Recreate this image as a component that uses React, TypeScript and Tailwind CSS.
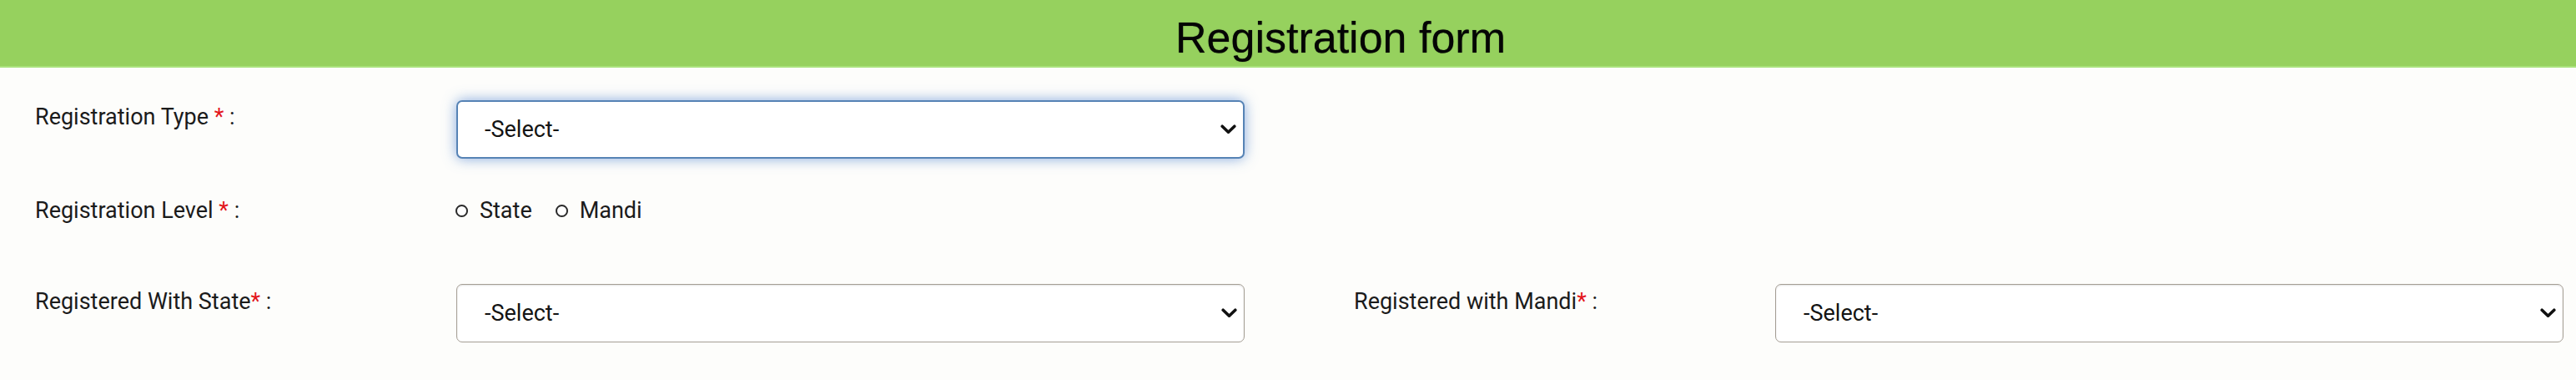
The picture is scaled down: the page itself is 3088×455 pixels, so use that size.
import React from "react";

const Req = () => <span className="text-[#e3141b]">*</span>;

function Chevron() {
  return (
    <svg width="19" height="12" viewBox="0 0 19 12" className="shrink-0">
      <polyline points="2.2,2.2 9.5,9.2 16.8,2.2" fill="none" stroke="#111" strokeWidth="3.6" strokeLinecap="round" strokeLinejoin="round" />
    </svg>
  );
}

function FakeSelect({ focused }: { focused?: boolean }) {
  return (
    <div
      className={
        focused
          ? "flex h-[70px] w-[945px] shrink-0 items-center justify-between rounded-[7px] border-2 border-[#5683b5] bg-white pl-[32px] pr-[8px] shadow-[0_0_16px_rgba(85,135,210,0.7)]"
          : "flex h-[70px] w-[945px] shrink-0 items-center justify-between rounded-[7px] border-[1.5px] border-[#a59e94] bg-white pl-[33px] pr-[8px] shadow-[inset_0_1px_2px_rgba(0,0,0,0.12)]"
      }
    >
      <span className="text-[27px] leading-none text-[#141414]">-Select-</span>
      <Chevron />
    </div>
  );
}

function Radio({ label }: { label: string }) {
  return (
    <label className="flex items-center gap-[14px]">
      <span className="h-[15px] w-[15px] rounded-full border-2 border-[#2b2b2b] bg-white" />
      <span>{label}</span>
    </label>
  );
}

export default function App() {
  return (
    <div className="min-h-[455px] w-full bg-[#fdfdfb] font-['Roboto','Noto_Sans',sans-serif] text-[27px] leading-[39px] text-[#1b1b1b]">
      <header className="flex h-[81px] justify-center border-b-2 border-[#a9e27c] bg-[#96d15e] pl-[126px] pt-[19px]">
        <h1 className="font-['Liberation_Sans',Arial,sans-serif] text-[52px] font-normal leading-none text-[#050505] [text-shadow:0_0_1px_rgba(0,0,0,0.7)]">
          Registration form
        </h1>
      </header>

      <main className="pl-[42px] pt-[39px] pb-[45px]">
        <div className="flex items-start">
          <div className="w-[505px] pt-[1px]">
            Registration Type <Req /> :
          </div>
          <FakeSelect focused />
        </div>

        <div className="mt-[43px] flex items-center">
          <div className="w-[504px]">
            Registration Level <Req /> :
          </div>
          <div className="flex items-center gap-[28px]">
            <Radio label="State" />
            <Radio label="Mandi" />
          </div>
        </div>

        <div className="mt-[68px] grid grid-cols-[1581px_1fr] items-start">
          <div className="flex items-start">
            <div className="w-[505px] pt-[2px]">
              Registered With State<Req /> :
            </div>
            <FakeSelect />
          </div>
          <div className="flex items-start">
            <div className="w-[505px] pt-[2px]">
              Registered with Mandi<Req /> :
            </div>
            <FakeSelect />
          </div>
        </div>
      </main>
    </div>
  );
}
